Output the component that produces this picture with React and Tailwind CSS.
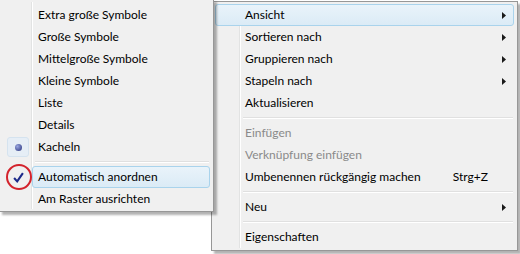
import React from 'react';

const font = { fontFamily: 'Lato, "Noto Sans", sans-serif' };

function Arrow() {
  return (
    <svg width="4" height="7" viewBox="0 0 4 7" className="mr-[9px]">
      <path d="M0 0 L4 3.5 L0 7 Z" fill="#1a1a1a" />
    </svg>
  );
}

function Row({ label, hint, sub, disabled, active, icon, gut, hl = 'left-[1px]' }) {
  return (
    <div className="relative flex h-[22px] items-center">
      {active && (
        <div className={`absolute inset-y-0 right-[1px] rounded-[3px] border border-[#a9d3ec] bg-gradient-to-b from-[#e9f3fa] to-[#dbebf6] ${hl}`} />
      )}
      <div className={`relative flex shrink-0 items-center justify-center ${gut}`}>{icon}</div>
      <span className={`relative flex-1 ${disabled ? 'text-[#8a8a8a]' : 'text-black'}`}>{label}</span>
      {hint && <span className="relative mr-[27px] text-black">{hint}</span>}
      {sub && <span className="relative"><Arrow /></span>}
    </div>
  );
}

function Sep({ pl }) {
  return (
    <div className={`flex h-[8px] items-center pr-[2px] ${pl}`}>
      <div className="w-full border-t border-b border-t-[#e0e0e0] border-b-white" />
    </div>
  );
}

function Menu({ children, gutter, className }) {
  return (
    <div className={`absolute border border-[#979797] bg-[#f0f0f0] px-[2px] shadow-[3px_3px_2px_rgba(0,0,0,0.3)] ${className}`}>
      <div className={`absolute top-[2px] bottom-[2px] w-[2px] border-l border-l-[#e2e3e3] border-r border-r-white ${gutter}`} />
      {children}
    </div>
  );
}

export default function App() {
  const rg = 'w-[31px]';
  const lg = 'w-[36px]';
  return (
    <div className="relative h-[254px] w-[520px] overflow-hidden bg-white text-[12px]" style={font}>
      <Menu className="left-[211px] top-[1px] w-[307px] py-[2px]" gutter="left-[27px]">
        <Row gut={rg} label="Ansicht" sub active />
        <Row gut={rg} label="Sortieren nach" sub />
        <Row gut={rg} label="Gruppieren nach" sub />
        <Row gut={rg} label="Stapeln nach" sub />
        <Row gut={rg} label="Aktualisieren" />
        <Sep pl="pl-[29px]" />
        <Row gut={rg} label="Einfügen" disabled />
        <Row gut={rg} label="Verknüpfung einfügen" disabled />
        <Row gut={rg} label="Umbenennen rückgängig machen" hint="Strg+Z" />
        <Sep pl="pl-[29px]" />
        <Row gut={rg} label="Neu" sub />
        <Sep pl="pl-[29px]" />
        <Row gut={rg} label="Eigenschaften" />
      </Menu>

      <Menu className="-top-[1px] -left-[1px] w-[215px] pt-[4px] pb-[1px]" gutter="left-[31px]">
        <Row gut={lg} label="Extra große Symbole" />
        <Row gut={lg} label="Große Symbole" />
        <Row gut={lg} label="Mittelgroße Symbole" />
        <Row gut={lg} label="Kleine Symbole" />
        <Row gut={lg} label="Liste" />
        <Row gut={lg} label="Details" />
        <Row
          gut={lg}
          label="Kacheln"
          icon={
            <div className="mr-[4px] flex h-[20px] w-[22px] items-center justify-center rounded-[3px] border border-[#d5e3ef] bg-[#e6eef6]">
              <div className="h-[7px] w-[7px] rounded-full bg-[radial-gradient(circle_at_35%_35%,#9aa7e0,#26307a)]" />
            </div>
          }
        />
        <Sep pl="pl-[33px]" />
        <Row
          gut={lg}
          label="Automatisch anordnen"
          active
          hl="left-[30px]"
          icon={
            <div className="mr-[3px] flex h-[26px] w-[26px] items-center justify-center rounded-full border-2 border-[#d3232c]">
              <svg width="11" height="11" viewBox="0 0 10 10">
                <path d="M1 5.5 L3.8 8.5 L9 1" fill="none" stroke="#1c2a8a" strokeWidth="1.9" />
              </svg>
            </div>
          }
        />
        <Row gut={lg} label="Am Raster ausrichten" />
      </Menu>
    </div>
  );
}
